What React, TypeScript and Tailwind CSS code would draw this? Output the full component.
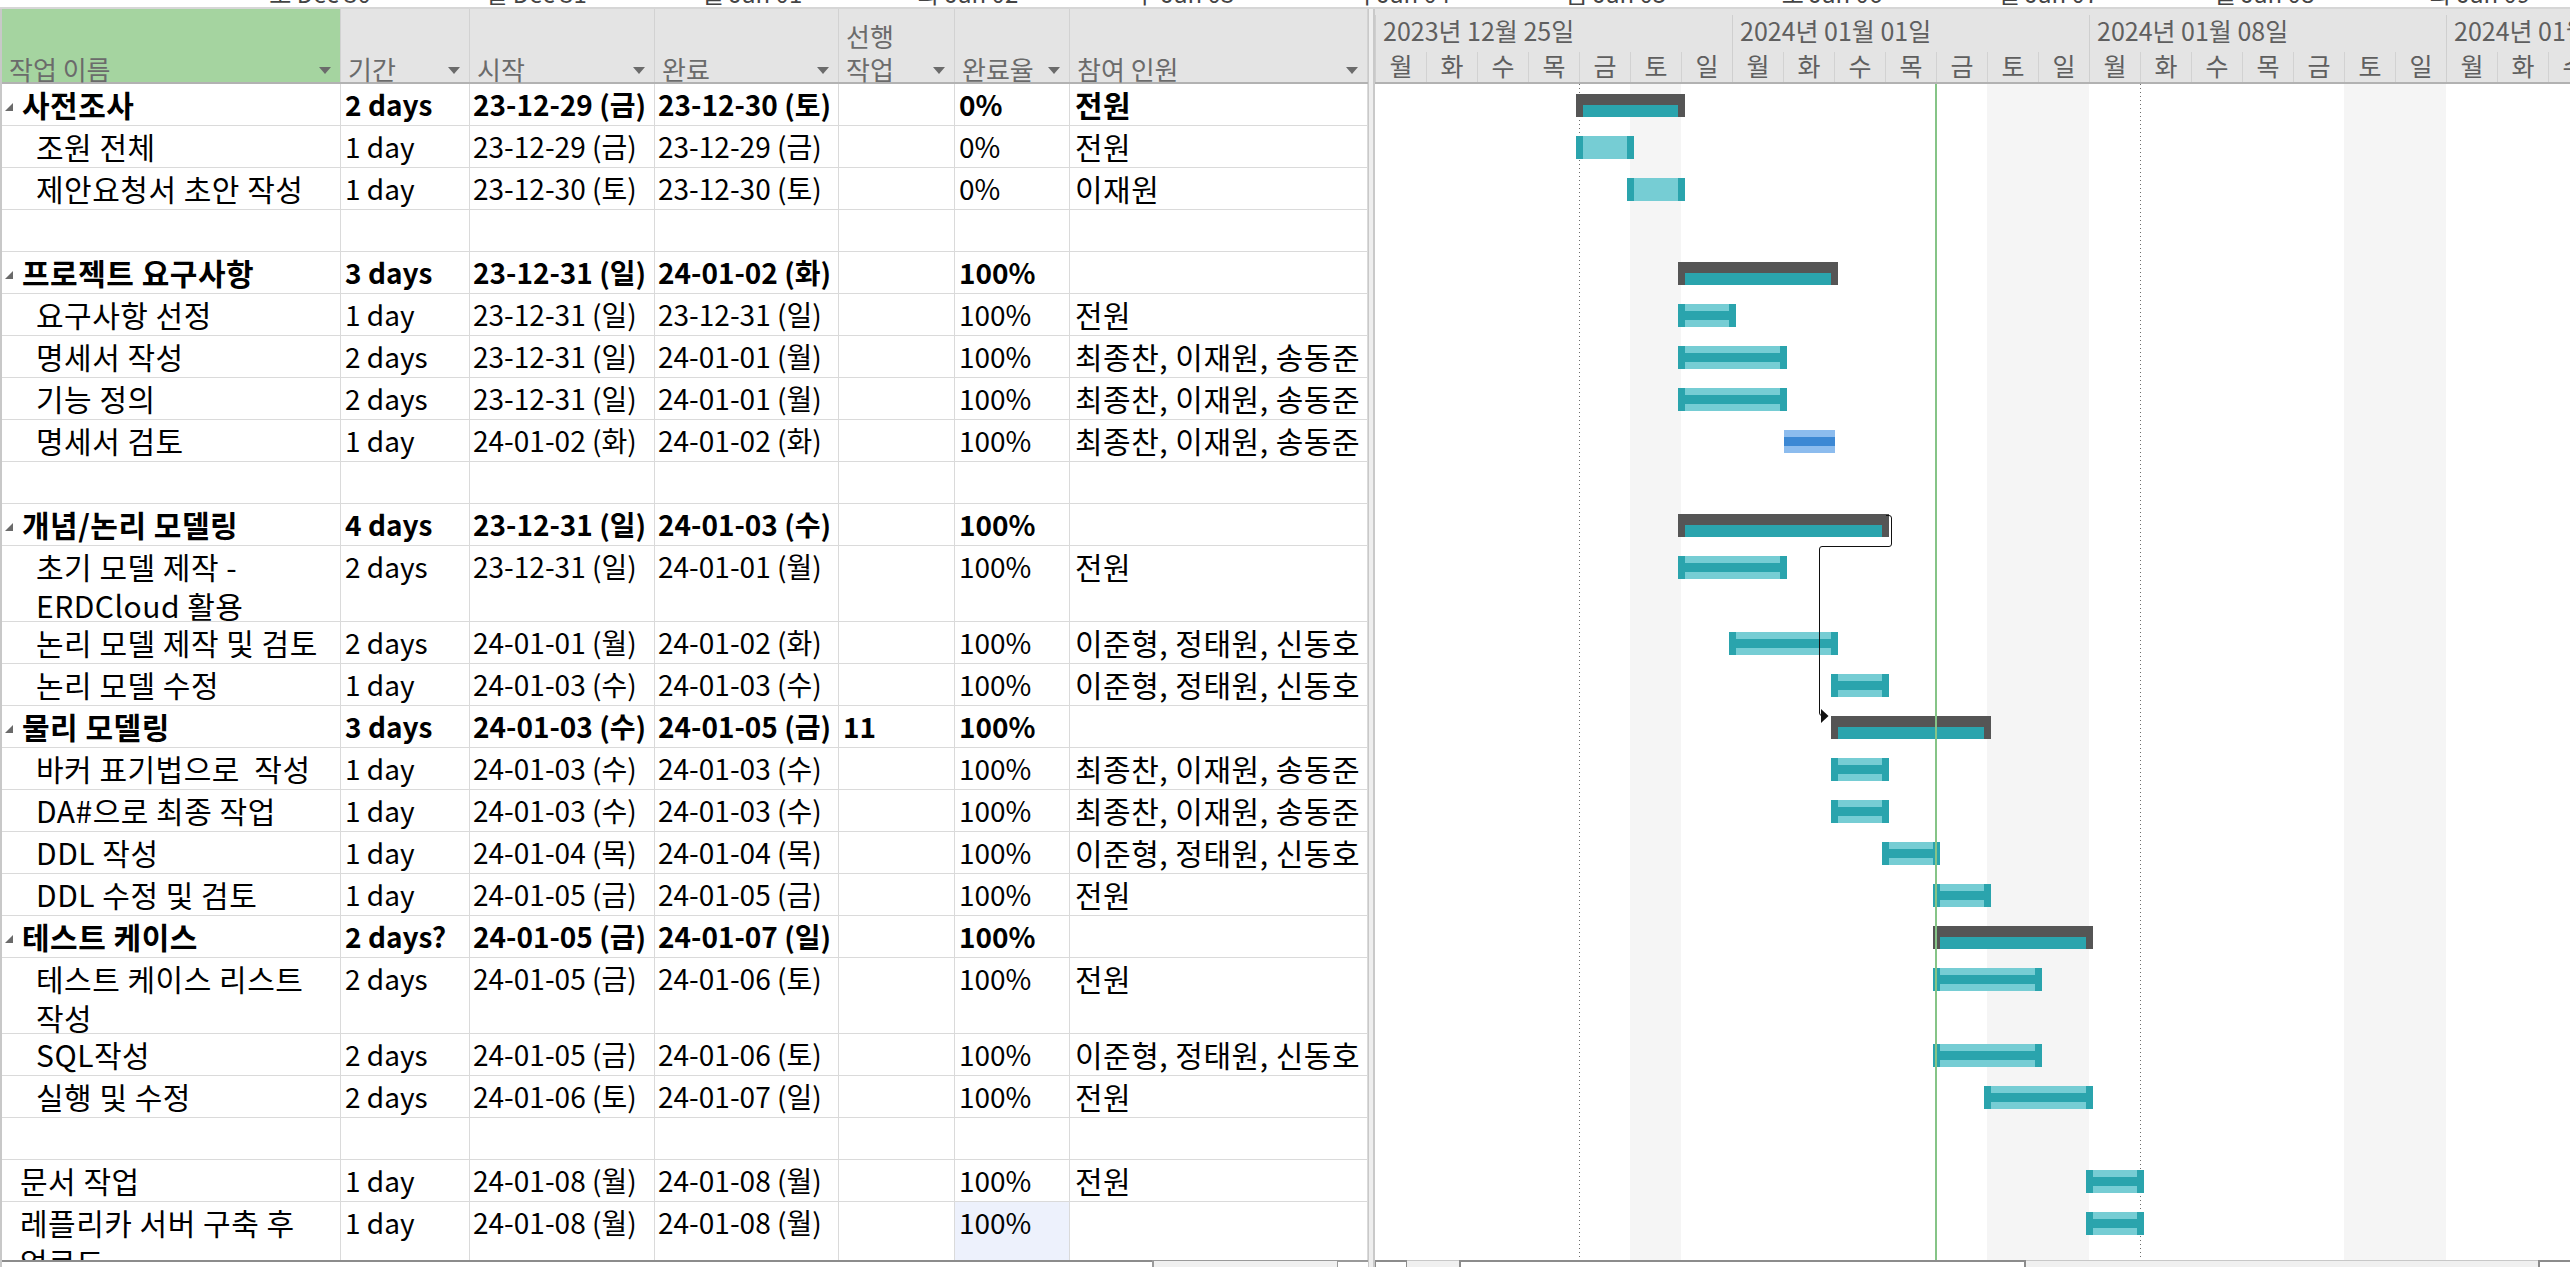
import React from 'react';

type Bar = { s: number; e: number; k: 'sum' | 'done' | 'open' | 'sel' };
type Row = {
  name?: string[];
  lvl?: 0 | 1 | 2;
  dur?: string;
  start?: string;
  fin?: string;
  pred?: string;
  pct?: string;
  res?: string;
  tall?: boolean;
  bar?: Bar;
  pctSel?: boolean;
};

const DAY = 51;
const A = '최종찬, 이재원, 송동준';
const B = '이준형, 정태원, 신동호';

const rows: Row[] = [
  { name: ['사전조사'], lvl: 0, dur: '2 days', start: '23-12-29 (금)', fin: '23-12-30 (토)', pct: '0%', res: '전원', bar: { s: 4, e: 6, k: 'sum' } },
  { name: ['조원 전체'], lvl: 1, dur: '1 day', start: '23-12-29 (금)', fin: '23-12-29 (금)', pct: '0%', res: '전원', bar: { s: 4, e: 5, k: 'open' } },
  { name: ['제안요청서 초안 작성'], lvl: 1, dur: '1 day', start: '23-12-30 (토)', fin: '23-12-30 (토)', pct: '0%', res: '이재원', bar: { s: 5, e: 6, k: 'open' } },
  {},
  { name: ['프로젝트 요구사항'], lvl: 0, dur: '3 days', start: '23-12-31 (일)', fin: '24-01-02 (화)', pct: '100%', bar: { s: 6, e: 9, k: 'sum' } },
  { name: ['요구사항 선정'], lvl: 1, dur: '1 day', start: '23-12-31 (일)', fin: '23-12-31 (일)', pct: '100%', res: '전원', bar: { s: 6, e: 7, k: 'done' } },
  { name: ['명세서 작성'], lvl: 1, dur: '2 days', start: '23-12-31 (일)', fin: '24-01-01 (월)', pct: '100%', res: A, bar: { s: 6, e: 8, k: 'done' } },
  { name: ['기능 정의'], lvl: 1, dur: '2 days', start: '23-12-31 (일)', fin: '24-01-01 (월)', pct: '100%', res: A, bar: { s: 6, e: 8, k: 'done' } },
  { name: ['명세서 검토'], lvl: 1, dur: '1 day', start: '24-01-02 (화)', fin: '24-01-02 (화)', pct: '100%', res: A, bar: { s: 8, e: 9, k: 'sel' } },
  {},
  { name: ['개념/논리 모델링'], lvl: 0, dur: '4 days', start: '23-12-31 (일)', fin: '24-01-03 (수)', pct: '100%', bar: { s: 6, e: 10, k: 'sum' } },
  { name: ['초기 모델 제작 -', 'ERDCloud 활용'], lvl: 1, tall: true, dur: '2 days', start: '23-12-31 (일)', fin: '24-01-01 (월)', pct: '100%', res: '전원', bar: { s: 6, e: 8, k: 'done' } },
  { name: ['논리 모델 제작 및 검토'], lvl: 1, dur: '2 days', start: '24-01-01 (월)', fin: '24-01-02 (화)', pct: '100%', res: B, bar: { s: 7, e: 9, k: 'done' } },
  { name: ['논리 모델 수정'], lvl: 1, dur: '1 day', start: '24-01-03 (수)', fin: '24-01-03 (수)', pct: '100%', res: B, bar: { s: 9, e: 10, k: 'done' } },
  { name: ['물리 모델링'], lvl: 0, dur: '3 days', start: '24-01-03 (수)', fin: '24-01-05 (금)', pred: '11', pct: '100%', bar: { s: 9, e: 12, k: 'sum' } },
  { name: ['바커 표기법으로  작성'], lvl: 1, dur: '1 day', start: '24-01-03 (수)', fin: '24-01-03 (수)', pct: '100%', res: A, bar: { s: 9, e: 10, k: 'done' } },
  { name: ['DA#으로 최종 작업'], lvl: 1, dur: '1 day', start: '24-01-03 (수)', fin: '24-01-03 (수)', pct: '100%', res: A, bar: { s: 9, e: 10, k: 'done' } },
  { name: ['DDL 작성'], lvl: 1, dur: '1 day', start: '24-01-04 (목)', fin: '24-01-04 (목)', pct: '100%', res: B, bar: { s: 10, e: 11, k: 'done' } },
  { name: ['DDL 수정 및 검토'], lvl: 1, dur: '1 day', start: '24-01-05 (금)', fin: '24-01-05 (금)', pct: '100%', res: '전원', bar: { s: 11, e: 12, k: 'done' } },
  { name: ['테스트 케이스'], lvl: 0, dur: '2 days?', start: '24-01-05 (금)', fin: '24-01-07 (일)', pct: '100%', bar: { s: 11, e: 14, k: 'sum' } },
  { name: ['테스트 케이스 리스트', '작성'], lvl: 1, tall: true, dur: '2 days', start: '24-01-05 (금)', fin: '24-01-06 (토)', pct: '100%', res: '전원', bar: { s: 11, e: 13, k: 'done' } },
  { name: ['SQL작성'], lvl: 1, dur: '2 days', start: '24-01-05 (금)', fin: '24-01-06 (토)', pct: '100%', res: B, bar: { s: 11, e: 13, k: 'done' } },
  { name: ['실행 및 수정'], lvl: 1, dur: '2 days', start: '24-01-06 (토)', fin: '24-01-07 (일)', pct: '100%', res: '전원', bar: { s: 12, e: 14, k: 'done' } },
  {},
  { name: ['문서 작업'], lvl: 2, dur: '1 day', start: '24-01-08 (월)', fin: '24-01-08 (월)', pct: '100%', res: '전원', bar: { s: 14, e: 15, k: 'done' } },
  { name: ['레플리카 서버 구축 후', '업로드'], lvl: 2, tall: true, dur: '1 day', start: '24-01-08 (월)', fin: '24-01-08 (월)', pct: '100%', pctSel: true, bar: { s: 14, e: 15, k: 'done' } },
];

const stripLabels = ['토 Dec 30', '일 Dec 31', '월 Jan 01', '화 Jan 02', '수 Jan 03', '목 Jan 04', '금 Jan 05', '토 Jan 06', '일 Jan 07', '월 Jan 08', '화 Jan 09'];
const weeks = ['2023년 12월 25일', '2024년 01월 01일', '2024년 01월 08일', '2024년 01월 15일'];
const dayNames = ['월', '화', '수', '목', '금', '토', '일'];
const shaded = [5, 12, 13, 19, 20];

function Arrow() {
  return (
    <svg width="12" height="7" viewBox="0 0 12 7" className="shrink-0 mb-[8px]">
      <polygon points="0,0 12,0 6,7" fill="#6b6b6b" />
    </svg>
  );
}

function HeadCell({ w, label, green }: { w: string; label: React.ReactNode; green?: boolean }) {
  return (
    <div className={`${w} ${green ? 'bg-[#a5d4a0]' : ''} h-full shrink-0 border-r border-[#d2d2d2] flex items-end justify-between pl-[7px] pr-[9px]`}>
      <span className="text-[26px] leading-[33px] text-[#6b6b6b] translate-y-[3px]">{label}</span>
      <Arrow />
    </div>
  );
}

function GBar({ b }: { b: Bar }) {
  const left = b.k === 'sel' ? b.s * DAY + 1 : b.s * DAY - 3;
  const width = b.k === 'sel' ? (b.e - b.s) * DAY : (b.e - b.s) * DAY + 7;
  if (b.k === 'sum')
    return (
      <div className="absolute top-[10px] h-[23px] bg-[#555555]" style={{ left, width }}>
        <div className="absolute left-[7px] right-[7px] top-[2px] bottom-0 flex flex-col">
          <div className="h-[9px]" />
          <div className="flex-1 bg-[#2aa4ad]" />
        </div>
      </div>
    );
  if (b.k === 'sel')
    return (
      <div className="absolute top-[10px] h-[23px] flex flex-col" style={{ left, width }}>
        <div className="h-[7px] bg-[#8cbcee]" />
        <div className="h-[9px] bg-[#3c88d4]" />
        <div className="h-[7px] bg-[#8cbcee]" />
      </div>
    );
  return (
    <div className="absolute top-[10px] h-[23px] bg-[#2aa4ad]" style={{ left, width }}>
      {b.k === 'open' ? (
        <div className="absolute left-[7px] right-[7px] top-0 bottom-0 bg-[#76cdd4]" />
      ) : (
        <>
          <div className="absolute left-[7px] right-[7px] top-0 h-[7px] bg-[#76cdd4]" />
          <div className="absolute left-[7px] right-[7px] bottom-0 h-[7px] bg-[#76cdd4]" />
        </>
      )}
    </div>
  );
}

function TablePane() {
  return (
    <div className="w-[1368px] shrink-0 flex flex-col border-l-2 border-[#c8c8c8]">
      <div className="h-[75px] shrink-0 flex bg-[#e4e4e4] border-b-2 border-[#b2b2b2]">
        <HeadCell w="w-[339px]" label="작업 이름" green />
        <HeadCell w="w-[129px]" label="기간" />
        <HeadCell w="w-[185px]" label="시작" />
        <HeadCell w="w-[184px]" label="완료" />
        <HeadCell w="w-[116px]" label={<>선행<br />작업</>} />
        <HeadCell w="w-[115px]" label="완료율" />
        <HeadCell w="w-[298px]" label="참여 인원" />
      </div>
      <div className="flex-1 min-h-0 overflow-hidden">
        {rows.map((r, i) => {
          const bold = r.lvl === 0 ? 'font-bold' : '';
          const cell = 'shrink-0 h-full border-r border-[#dadada] whitespace-nowrap pt-[1px] leading-[38px] text-[28px]';
          const kcell = 'shrink-0 h-full border-r border-[#dadada] whitespace-nowrap pt-[1px] leading-[38px] text-[30px] tracking-[0.5px]';
          return (
            <div key={i} className={`${r.tall ? 'h-[76px]' : 'h-[42px]'} flex border-b border-[#dadada]`}>
              <div className={`${kcell} w-[339px] ${bold} flex items-start ${r.lvl === 1 ? 'pl-[34px]' : r.lvl === 2 ? 'pl-[18px]' : ''}`}>
                {r.lvl === 0 && (
                  <svg width="8" height="8" viewBox="0 0 8 8" className="ml-[3px] mt-[18px] mr-[9px] shrink-0">
                    <polygon points="0,8 8,8 8,0" fill="#6a6a6a" />
                  </svg>
                )}
                <div>
                  {r.name?.map((l, j) => (
                    <div key={j} className={`whitespace-pre ${j > 0 ? 'mt-[1px]' : ''}`}>{l}</div>
                  ))}
                </div>
              </div>
              <div className={`${cell} w-[129px] pl-[4px] ${bold}`}>{r.dur}</div>
              <div className={`${cell} w-[185px] pl-[3px] ${bold}`}>{r.start}</div>
              <div className={`${cell} w-[184px] pl-[3px] ${bold}`}>{r.fin}</div>
              <div className={`${cell} w-[116px] pl-[4px] ${bold}`}>{r.pred}</div>
              <div className={`${cell} w-[115px] pl-[4px] ${bold} ${r.pctSel ? 'bg-[#edf1fc]' : ''}`}>{r.pct}</div>
              <div className={`${kcell} w-[298px] pl-[5px] ${bold}`}>{r.res}</div>
            </div>
          );
        })}
      </div>
      <div className="h-[7px] shrink-0 flex">
        <div className="w-[1150px] border-t-2 border-[#8c8c8c] bg-white" />
        <div className="flex-1 bg-[#f0f0f0] border-t border-l-2 border-[#9a9a9a]" />
        <div className="w-[31px] bg-white border-t-2 border-l border-[#9a9a9a]" />
      </div>
    </div>
  );
}

function GanttPane() {
  return (
    <div className="flex-1 min-w-0 flex flex-col overflow-hidden">
      <div className="h-[75px] shrink-0 bg-[#e4e4e4] border-b-2 border-[#b2b2b2] flex pt-[6px] overflow-hidden">
        {weeks.map((w, wi) => (
          <div key={wi} className="w-[357px] shrink-0 border-l border-[#cfcfcf] flex flex-col">
            <div className="h-[35px] pl-[7px] text-[25px] leading-[30px] text-[#5f5f5f] whitespace-nowrap">{w}</div>
            <div className="h-[30px] mt-[2px] flex">
              {dayNames.map((d, di) => (
                <div
                  key={di}
                  className={`${di === 0 ? 'w-[50px]' : 'w-[51px] border-l border-[#d2d2d2]'} shrink-0 text-center text-[25px] leading-[26px] text-[#5f5f5f]`}
                >
                  {d}
                </div>
              ))}
            </div>
          </div>
        ))}
      </div>
      <div className="flex-1 min-h-0 relative overflow-hidden">
        <div className="absolute inset-0 flex">
          {Array.from({ length: 25 }).map((_, i) => (
            <div key={i} className={`w-[51px] shrink-0 ${shaded.includes(i) ? 'bg-[#f5f5f5]' : ''}`} />
          ))}
        </div>
        <div className="absolute top-0 bottom-0 left-[204px] w-px bg-[repeating-linear-gradient(to_bottom,#6e6e6e_0_1px,transparent_1px_4px)]" />
        <div className="absolute top-0 bottom-0 left-[765px] w-px bg-[repeating-linear-gradient(to_bottom,#6e6e6e_0_1px,transparent_1px_4px)]" />
        <div className="relative">
          {rows.map((r, i) => (
            <div key={i} className={`${r.tall ? 'h-[76px]' : 'h-[42px]'} relative`}>
              {r.bar && <GBar b={r.bar} />}
            </div>
          ))}
        </div>
        <svg className="absolute inset-0 w-full h-full pointer-events-none">
          <path
            d="M511 431.5 H514 Q516.5 431.5 516.5 434 V460 Q516.5 462.5 514 462.5 H447 Q444.5 462.5 444.5 465 V629 Q444.5 631.5 447 631.5"
            fill="none"
            stroke="#111"
            strokeWidth="1"
          />
          <polygon points="446,625 453.5,632 446,639" fill="#111" />
        </svg>
        <div className="absolute top-0 bottom-0 left-[560px] w-[2px] bg-[#86c487]" />
      </div>
      <div className="h-[7px] shrink-0 flex">
        <div className="w-[32px] bg-white border-t-2 border-x border-[#8c8c8c]" />
        <div className="w-[52px] bg-[#f0f0f0] border-t border-[#c8c8c8]" />
        <div className="w-[567px] bg-white border-t-2 border-x-2 border-[#8c8c8c]" />
        <div className="flex-1 bg-[#f0f0f0] border-t border-[#c8c8c8]" />
        <div className="w-[32px] bg-white border-t-2 border-l-2 border-[#8c8c8c]" />
      </div>
    </div>
  );
}

export default function App() {
  return (
    <div className="w-[2570px] h-[1267px] overflow-hidden bg-white flex flex-col font-['Noto_Sans_CJK_KR',sans-serif] text-black">
      <div className="h-[9px] shrink-0 border-b-2 border-[#d6d6d6] overflow-hidden">
        <div className="flex pl-[212px] -mt-[20px]">
          {stripLabels.map((l, i) => (
            <div key={i} className="w-[216px] shrink-0 text-center text-[24px] leading-[26px] text-[#444]">{l}</div>
          ))}
        </div>
      </div>
      <div className="flex flex-1 min-h-0">
        <TablePane />
        <div className="w-[7px] shrink-0 bg-[#eeeeee] border-l border-r-2 border-[#c9c9c9]" />
        <GanttPane />
      </div>
    </div>
  );
}
